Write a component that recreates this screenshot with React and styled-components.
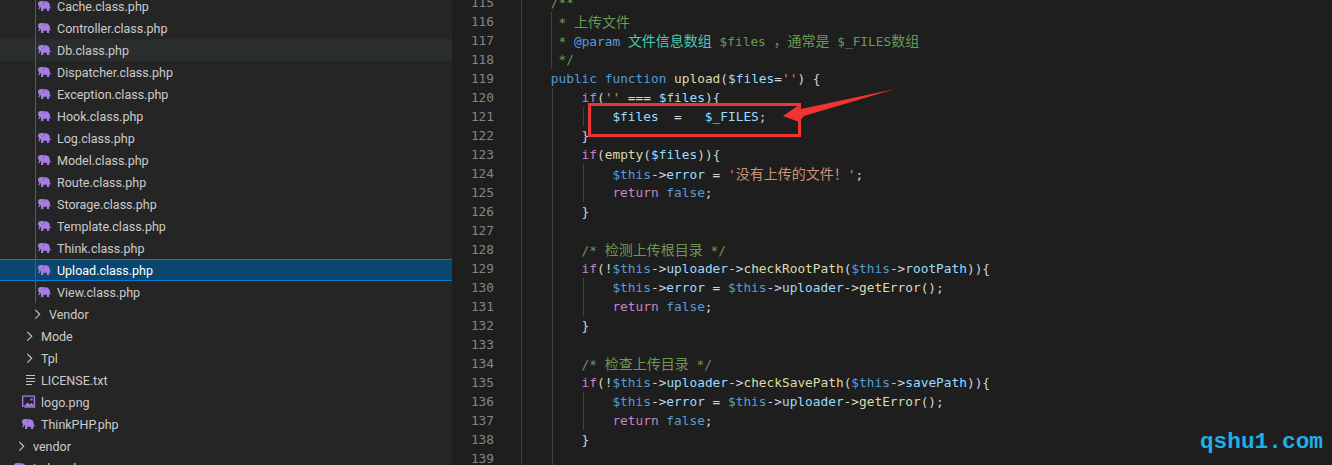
import React from "react";
import styled, { createGlobalStyle } from "styled-components";

const GlobalStyle = createGlobalStyle`
  html, body {
    margin: 0;
    height: 465px;
    overflow: hidden;
    background: #1e1e1e;
  }
`

const Window = styled.div`
  display: flex;
  width: 1332px;
  height: 465px;
  overflow: hidden;
  position: relative;
`

// explorer tree
const Sidebar = styled.div`
  width: 452px;
  flex: none;
  height: 465px;
  overflow: hidden;
  background: #252526;
  font-family: Roboto, sans-serif;
  font-size: 12.5px;
  color: #cccccc;
`
const Tree = styled.div`
  margin-top: -5px;
  position: relative;
`
const TreeGuide = styled.div`
  position: absolute;
  left: 35px;
  top: 0;
  width: 1px;
  height: 308px;
  background: #585858;
`
const Row = styled.div`
  display: flex;
  align-items: center;
  box-sizing: border-box;
  height: 22px;
  padding-left: ${p => p.$indent}px;
  white-space: nowrap;
  background: ${p => p.$selected ? "#094771" : p.$hover ? "#2a2d2e" : "transparent"};
  color: ${p => p.$selected ? "#ffffff" : "#cccccc"};
  border-top: 1px solid ${p => p.$selected ? "#007fd4" : "transparent"};
  border-bottom: 1px solid ${p => p.$selected ? "#007fd4" : "transparent"};
`
const IconBox = styled.svg`
  width: 16px;
  height: 16px;
  flex: none;
  margin-right: 4px;
`

const Elephant = () => (
  <IconBox viewBox="0 0 16 16">
    <path
      fill="#a57ce0"
      d="M3.800 3C2 3 1 4.200 1 5.800c0 1.100.4 1.900 1 2.400v1.500c0 .5-.3.7-.8.7v.8c1.300.1 2-.6 2-1.700V9.200h.8V13h2.300v-2.200h3.600V13h2.300V9.600c.5.400.7.900.7 1.400h.6c.2-1.100 0-2.200-.7-3 .2-3-1.600-4.800-5-4.800H7C6.300 3.200 5 3 3.800 3z"
    />
    <path fill="none" stroke="#6f55a0" strokeWidth=".6" d="M6.900 3.600c.3 1.300-.2 2.600-1.500 3.100" />
  </IconBox>
)
const TextLines = () => (
  <IconBox viewBox="0 0 16 16">
    <path stroke="#c5c5c5" strokeWidth="1.200" d="M5 3.500h9M5 6.500h9M5 9.500h9M5 12.500h6" />
  </IconBox>
)
const Picture = () => (
  <IconBox viewBox="0 0 16 16">
    <path fill="none" stroke="#a57ce0" strokeWidth="1.300" d="M1.700 2.200h11.600v10H1.700z" />
    <path fill="#a57ce0" d="M3.500 12l3-3.500 2 2 2-1.500 3 3zM9.500 4.500h2v2h-2z" />
    <path fill="#a57ce0" d="M3.400 14h10.800V4.500h-1.200v8.300H3.400z" opacity=".7" />
  </IconBox>
)
const Chevron = () => (
  <IconBox viewBox="0 0 16 16">
    <path fill="none" stroke="#c5c5c5" strokeWidth="1.200" d="M6.300 3.800L10.700 8.300L6.300 12.700" />
  </IconBox>
)

const fileRow = (name, extra) => ({ name, indent: 37, icon: Elephant, ...extra })
const treeRows = [
  fileRow("Cache.class.php"),
  fileRow("Controller.class.php"),
  fileRow("Db.class.php", { hover: true }),
  fileRow("Dispatcher.class.php"),
  fileRow("Exception.class.php"),
  fileRow("Hook.class.php"),
  fileRow("Log.class.php"),
  fileRow("Model.class.php"),
  fileRow("Route.class.php"),
  fileRow("Storage.class.php"),
  fileRow("Template.class.php"),
  fileRow("Think.class.php"),
  fileRow("Upload.class.php", { selected: true }),
  fileRow("View.class.php"),
  { name: "Vendor", indent: 29, icon: Chevron },
  { name: "Mode", indent: 21, icon: Chevron },
  { name: "Tpl", indent: 21, icon: Chevron },
  { name: "LICENSE.txt", indent: 21, icon: TextLines },
  { name: "logo.png", indent: 21, icon: Picture },
  { name: "ThinkPHP.php", indent: 21, icon: Elephant },
  { name: "vendor", indent: 13, icon: Chevron },
  { name: "index.php", indent: 13, icon: Elephant },
]

// code editor
const Editor = styled.div`
  flex: 1;
  min-width: 0;
  height: 465px;
  overflow: hidden;
  background: #1e1e1e;
  position: relative;
`
const Lines = styled.div`
  margin-top: -7px;
  font-family: "DejaVu Sans Mono", monospace;
  font-size: 12.8px;
  line-height: 19px;
`
const Line = styled.div`
  display: flex;
  height: 19px;
  white-space: pre;
`
const LineNumber = styled.div`
  width: 42px;
  margin-right: 27px;
  flex: none;
  text-align: right;
  color: #858585;
`
const Indent = styled.div`
  width: 30.8px;
  flex: none;
  box-sizing: border-box;
  border-left: 1px solid #404040;
`
const Code = styled.div`
  margin-left: -1px;
  box-shadow: ${p => p.$guide ? "inset 1px 0 #404040" : "none"};
`
const tokenColors = {
  c: "#6a9955",
  k: "#569cd6",
  m: "#c586c0",
  f: "#dcdcaa",
  v: "#9cdcfe",
  s: "#ce9178",
  t: "#4ec9b0",
  p: "#d4d4d4",
}
const Token = styled.span`
  color: ${p => tokenColors[p.$kind]};
`
const Cjk = styled.span`
  font-family: "Noto Sans CJK SC", sans-serif;
  font-size: 14px;
  line-height: 19px;
`

// split out the chinese runs, they need their own font size
const renderText = text =>
  text.split(/([\u3000-\u9fff\uff00-\uffef]+)/).map((part, i) =>
    i % 2 ? <Cjk key={i}>{part}</Cjk> : part
  )

const thisVar = ["$this", "k"]
const arrow = ["->", "p"]
const checkLine = (fn, prop) => [
  ["if", "m"], ["(!", "p"], thisVar, arrow, ["uploader", "v"], arrow, [fn, "f"], ["(", "p"],
  thisVar, arrow, [prop, "v"], [")){", "p"],
]
const errorLine = [
  thisVar, arrow, ["error", "v"], [" = ", "p"], thisVar, arrow, ["uploader", "v"], arrow,
  ["getError", "f"], ["();", "p"],
]
const returnFalse = [["return ", "m"], ["false", "k"], [";", "p"]]

const codeLines = [
  { n: 115, d: 1, t: [["/**", "c"]] },
  { n: 116, d: 1, guide: true, t: [[" * 上传文件", "c"]] },
  { n: 117, d: 1, guide: true, t: [[" * ", "c"], ["@param", "k"], [" ", "c"], ["文件信息数组", "t"], [" $files ，通常是 $_FILES数组", "c"]] },
  { n: 118, d: 1, guide: true, t: [[" */", "c"]] },
  { n: 119, d: 1, t: [["public function ", "k"], ["upload", "f"], ["(", "p"], ["$files", "v"], ["=", "p"], ["''", "s"], [") {", "p"]] },
  { n: 120, d: 2, t: [["if", "m"], ["(", "p"], ["''", "s"], [" === ", "p"], ["$files", "v"], ["){", "p"]] },
  { n: 121, d: 3, t: [["$files", "v"], ["  =   ", "p"], ["$_FILES", "v"], [";", "p"]] },
  { n: 122, d: 2, t: [["}", "p"]] },
  { n: 123, d: 2, t: [["if", "m"], ["(", "p"], ["empty", "f"], ["(", "p"], ["$files", "v"], [")){", "p"]] },
  { n: 124, d: 3, t: [thisVar, arrow, ["error", "v"], [" = ", "p"], ["'没有上传的文件！'", "s"], [";", "p"]] },
  { n: 125, d: 3, t: returnFalse },
  { n: 126, d: 2, t: [["}", "p"]] },
  { n: 127, d: 2, t: [] },
  { n: 128, d: 2, t: [["/* 检测上传根目录 */", "c"]] },
  { n: 129, d: 2, t: checkLine("checkRootPath", "rootPath") },
  { n: 130, d: 3, t: errorLine },
  { n: 131, d: 3, t: returnFalse },
  { n: 132, d: 2, t: [["}", "p"]] },
  { n: 133, d: 2, t: [] },
  { n: 134, d: 2, t: [["/* 检查上传目录 */", "c"]] },
  { n: 135, d: 2, t: checkLine("checkSavePath", "savePath") },
  { n: 136, d: 3, t: errorLine },
  { n: 137, d: 3, t: returnFalse },
  { n: 138, d: 2, t: [["}", "p"]] },
  { n: 139, d: 2, t: [] },
]

// annotation drawn over the code
const RedBox = styled.div`
  position: absolute;
  left: 588px;
  top: 103px;
  width: 213px;
  height: 34px;
  box-sizing: border-box;
  border: 3px solid #f03333;
`
const ArrowMark = styled.svg`
  position: absolute;
  left: 0;
  top: 0;
  width: 1332px;
  height: 465px;
`
const Watermark = styled.div`
  position: absolute;
  right: 9px;
  top: 428px;
  font-family: "Liberation Mono", monospace;
  font-weight: bold;
  font-size: 22.8px;
  line-height: 28px;
  color: #1fb0e6;
`

export default function App() {
  return (
    <Window>
      <GlobalStyle />
      <Sidebar>
        <Tree>
          <TreeGuide />
          {treeRows.map(row => {
            const Icon = row.icon
            return (
              <Row key={row.name} $indent={row.indent} $hover={row.hover} $selected={row.selected}>
                <Icon />
                {row.name}
              </Row>
            )
          })}
        </Tree>
      </Sidebar>
      <Editor>
        <Lines>
          {codeLines.map(line => (
            <Line key={line.n}>
              <LineNumber>{line.n}</LineNumber>
              {Array.from({ length: line.d }, (_, i) => <Indent key={i} />)}
              <Code $guide={line.guide}>
                {line.t.map(([text, kind], i) => (
                  <Token key={i} $kind={kind}>{renderText(text)}</Token>
                ))}
              </Code>
            </Line>
          ))}
        </Lines>
      </Editor>
      <RedBox />
      <ArrowMark viewBox="0 0 1332 465">
        <path fill="#f03333" d="M783 116L799 105L801 109L895 89L804 116L799 122z" />
      </ArrowMark>
      <Watermark>qshu1.com</Watermark>
    </Window>
  )
}
